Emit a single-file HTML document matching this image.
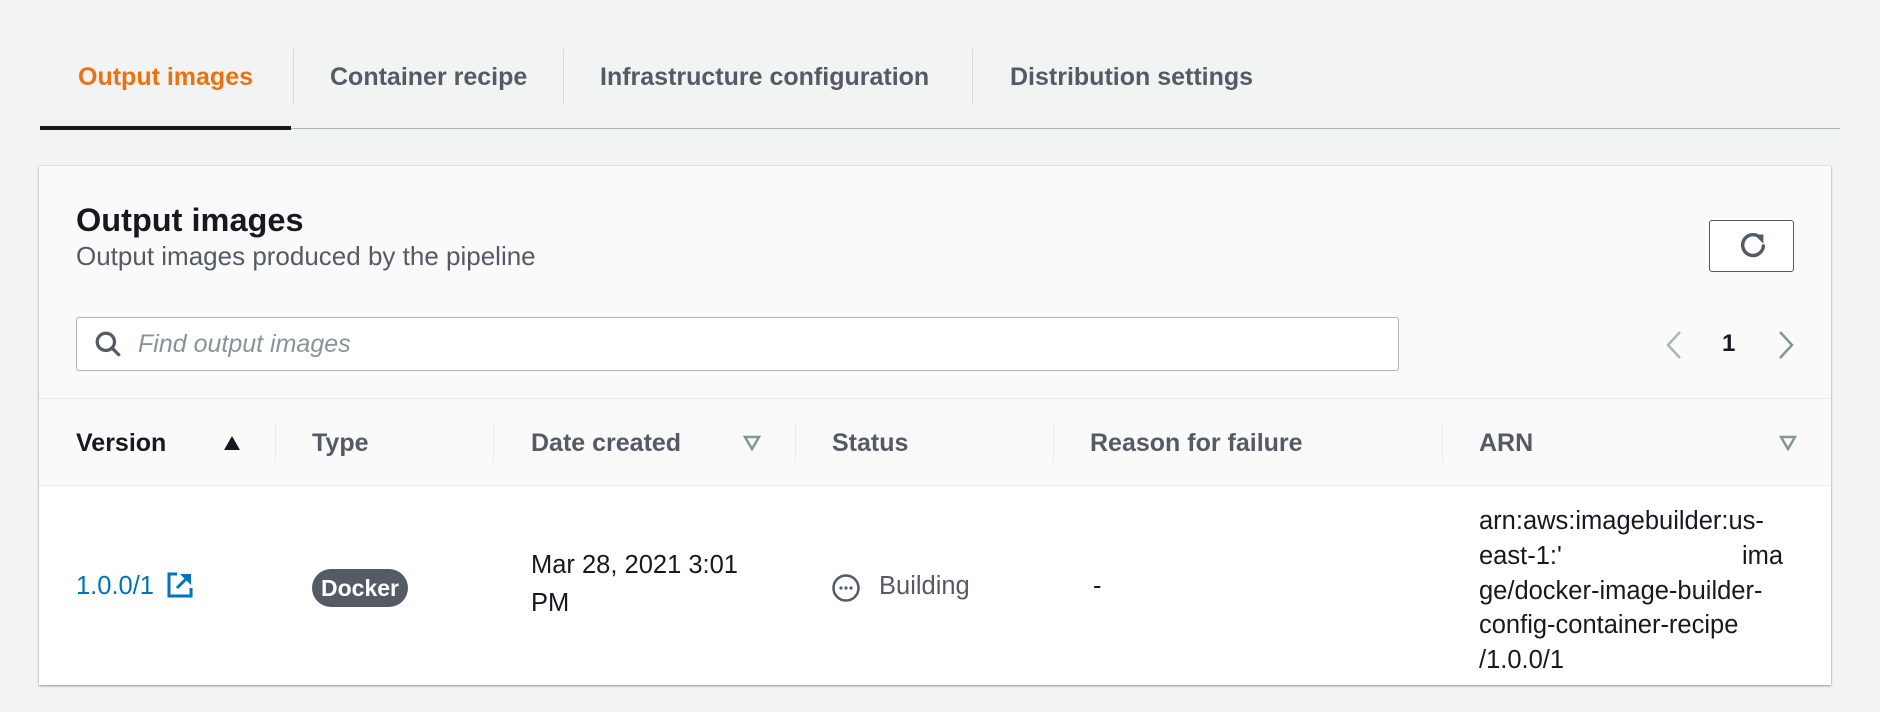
<!DOCTYPE html>
<html><head><meta charset="utf-8"><style>
*{margin:0;padding:0;box-sizing:border-box}
body{width:1880px;height:712px;background:#f2f3f3;font-family:"Liberation Sans",Arial,sans-serif;position:relative;overflow:hidden;color:#16191f}
.a{position:absolute;white-space:nowrap}
.t{position:absolute;white-space:nowrap;height:40px;line-height:40px}
.tab{font-weight:bold;font-size:25px;color:#545b64;top:57px}
.sep{position:absolute;width:1px;background:#d5dbdb}
.hd{font-weight:bold;font-size:25px;color:#545b64;top:423px}
.td{font-size:25.5px;color:#16191f}
</style></head><body>
<div class="t tab" style="left:78px;color:#ec7211">Output images</div>
<div class="sep" style="left:293px;top:49px;height:55px"></div>
<div class="t tab" style="left:330px">Container recipe</div>
<div class="sep" style="left:563px;top:49px;height:55px"></div>
<div class="t tab" style="left:600px">Infrastructure configuration</div>
<div class="sep" style="left:972px;top:49px;height:55px"></div>
<div class="t tab" style="left:1010px">Distribution settings</div>
<div class="a" style="left:40px;top:128px;width:1800px;height:1px;background:#aab7b8"></div>
<div class="a" style="left:40px;top:126px;width:251px;height:4px;background:#16191f"></div>

<div class="a" style="left:39px;top:166px;width:1792px;height:519px;background:#fff;box-shadow:0 1px 2px rgba(0,28,36,.4),0 0 1px rgba(0,28,36,.25)"></div>
<div class="a" style="left:39px;top:166px;width:1792px;height:320px;background:#fafafa;border-bottom:1px solid #eaeded"></div>
<div class="a" style="left:39px;top:398px;width:1792px;height:1px;background:#eaeded"></div>

<div class="t" style="left:76px;top:200px;font-size:32.5px;font-weight:bold">Output images</div>
<div class="t" style="left:76px;top:236px;font-size:26px;color:#545b64">Output images produced by the pipeline</div>

<div class="a" style="left:1709px;top:220px;width:85px;height:52px;border:1px solid #545b64;border-radius:3px;background:#fff"></div>
<svg class="a" style="left:1738px;top:231px" width="30" height="30" viewBox="0 0 26 26"><path d="M20 6.5A9 9 0 1 0 22 13" fill="none" stroke="#545b64" stroke-width="3" stroke-linecap="round"/><path d="M14 3h8v8z" fill="#545b64"/></svg>

<div class="a" style="left:76px;top:317px;width:1323px;height:54px;border:1px solid #aab7b8;border-radius:3px;background:#fff"></div>
<svg class="a" style="left:94px;top:330px" width="28" height="28" viewBox="0 0 26 26"><circle cx="11" cy="11" r="8" fill="none" stroke="#545b64" stroke-width="3"/><path d="M17 17l6 6" stroke="#545b64" stroke-width="3" stroke-linecap="round"/></svg>
<div class="t" style="left:138px;top:324px;font-size:25px;font-style:italic;color:#879596">Find output images</div>

<svg class="a" style="left:1665px;top:330px" width="18" height="30" viewBox="0 0 18 30"><path d="M15 2L3 15l12 13" fill="none" stroke="#aab7b8" stroke-width="2.5"/></svg>
<div class="t" style="left:1722px;top:324px;font-size:24px;font-weight:bold">1</div>
<svg class="a" style="left:1777px;top:330px" width="18" height="30" viewBox="0 0 18 30"><path d="M3 2l12 13L3 28" fill="none" stroke="#879596" stroke-width="2.5"/></svg>

<div class="t hd" style="left:76px;color:#16191f">Version</div>
<svg class="a" style="left:223px;top:435px" width="18" height="16"><path d="M9 1L17 15H1z" fill="#16191f"/></svg>
<div class="sep" style="left:275px;top:422px;height:41px;background:#eaeded"></div>
<div class="t hd" style="left:312px">Type</div>
<div class="sep" style="left:493px;top:422px;height:41px;background:#eaeded"></div>
<div class="t hd" style="left:531px">Date created</div>
<svg class="a" style="left:743px;top:435px" width="18" height="16"><path d="M2 2H16L9 14z" fill="none" stroke="#879596" stroke-width="2.5"/></svg>
<div class="sep" style="left:795px;top:422px;height:41px;background:#eaeded"></div>
<div class="t hd" style="left:832px">Status</div>
<div class="sep" style="left:1053px;top:422px;height:41px;background:#eaeded"></div>
<div class="t hd" style="left:1090px">Reason for failure</div>
<div class="sep" style="left:1442px;top:422px;height:41px;background:#eaeded"></div>
<div class="t hd" style="left:1479px">ARN</div>
<svg class="a" style="left:1779px;top:435px" width="18" height="16"><path d="M2 2H16L9 14z" fill="none" stroke="#879596" stroke-width="2.5"/></svg>

<div class="t td" style="left:76px;top:566px;color:#0073bb">1.0.0/1</div>
<svg class="a" style="left:167px;top:572px" width="26" height="26" viewBox="0 0 26 26"><path d="M10 2H2v22h22v-8" fill="none" stroke="#0073bb" stroke-width="3"/><path d="M10 16L22 4" stroke="#0073bb" stroke-width="3"/><path d="M13 2h11v11z" fill="#0073bb"/></svg>
<div class="a" style="left:312px;top:569px;width:96px;height:38px;border-radius:19px;background:#545b64;color:#fff;font-size:23px;font-weight:bold;text-align:center;line-height:38px">Docker</div>
<div class="a td" style="left:531px;top:546px;line-height:38px">Mar 28, 2021 3:01<br>PM</div>
<svg class="a" style="left:831px;top:573px" width="30" height="30" viewBox="0 0 30 30"><circle cx="15" cy="15" r="12.5" fill="none" stroke="#545b64" stroke-width="2.5"/><circle cx="10" cy="15" r="1.6" fill="#545b64"/><circle cx="15" cy="15" r="1.6" fill="#545b64"/><circle cx="20" cy="15" r="1.6" fill="#545b64"/></svg>
<div class="t td" style="left:879px;top:566px;color:#545b64">Building</div>
<div class="t td" style="left:1093px;top:566px">-</div>
<div class="a td" style="left:1479px;top:504px;line-height:34.8px">arn:aws:imagebuilder:us-<br>east-1:'<br>ge/docker-image-builder-<br>config-container-recipe<br>/1.0.0/1</div>
<div class="a td" style="left:1742px;top:539px;line-height:34.8px">ima</div>
</body></html>
